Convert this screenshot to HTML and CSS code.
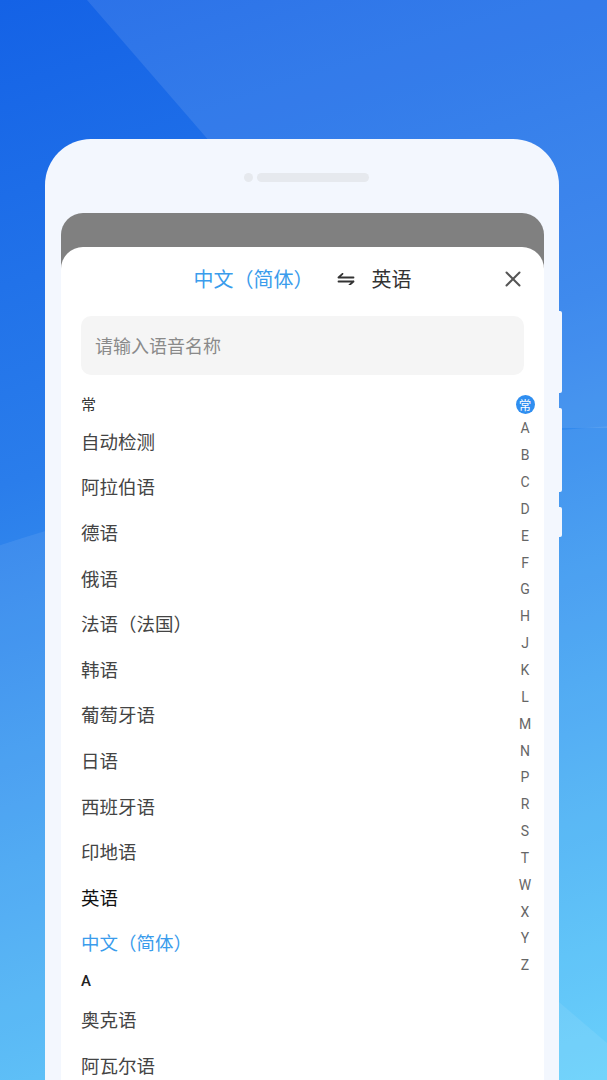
FILE: index.html
```html
<!DOCTYPE html>
<html lang="zh-CN">
<head>
<meta charset="utf-8">
<title>选择语言</title>
<link rel="stylesheet" href="styles.css">
</head>
<body>
<div class="deco"></div>
<div class="phone">
  <span class="side-btn b1"></span>
  <span class="side-btn b2"></span>
  <span class="side-btn b3"></span>
  <div class="notch"><span class="cam"></span><span class="speaker"></span></div>
  <div class="screen">
    <div class="sheet">
      <div class="head">
        <div class="title">
          <span class="src">中文（简体）</span>
          <svg class="swap" width="18" height="12" viewBox="0 0 18 12"><path d="M1.5 4.5H16.5M1.5 4.5L5.5 0.8M16.5 8.5H1.5M16.5 8.5L12.5 12" fill="none" stroke="#333" stroke-width="1.8" stroke-linecap="round" stroke-linejoin="round"/></svg>
          <span class="dst">英语</span>
        </div>
        <svg class="close" width="16" height="16" viewBox="0 0 16 16"><path d="M1.5 1.5L14.5 14.5M14.5 1.5L1.5 14.5" fill="none" stroke="#555" stroke-width="2" stroke-linecap="round"/></svg>
      </div>
      <input class="search" type="text" placeholder="请输入语音名称">
      <div class="content">
        <div class="list">
          <div class="sec">常</div>
          <div class="item">自动检测</div>
          <div class="item">阿拉伯语</div>
          <div class="item">德语</div>
          <div class="item">俄语</div>
          <div class="item">法语（法国）</div>
          <div class="item">韩语</div>
          <div class="item">葡萄牙语</div>
          <div class="item">日语</div>
          <div class="item">西班牙语</div>
          <div class="item">印地语</div>
          <div class="item target">英语</div>
          <div class="item source">中文（简体）</div>
          <div class="sec letter">A</div>
          <div class="item">奥克语</div>
          <div class="item">阿瓦尔语</div>
        </div>
        <div class="index">
          <span class="on">常</span>
          <span>A</span><span>B</span><span>C</span><span>D</span><span>E</span><span>F</span><span>G</span><span>H</span><span>J</span><span>K</span><span>L</span><span>M</span><span>N</span><span>P</span><span>R</span><span>S</span><span>T</span><span>W</span><span>X</span><span>Y</span><span>Z</span>
        </div>
      </div>
    </div>
  </div>
</div>
</body>
</html>
```

FILE: styles.css
```css
html {
  overflow: hidden;
}
body {
  margin: 0;
  width: 607px;
  height: 1080px;
  box-sizing: border-box;
  padding: 139px 0 0 45px;
  overflow: hidden;
  position: relative;
  background: linear-gradient(162deg, #1462e6 0%, #2a7deb 38%, #44a4f2 68%, #5ccdfb 100%);
  font-family: "Noto Sans CJK SC", "Noto Sans", sans-serif;
}
body::before {
  content: "";
  position: absolute;
  inset: 0;
  background: rgba(255, 255, 255, 0.1);
  clip-path: polygon(87px 0, 607px 0, 607px 428px, 458px 428px);
}
body::after {
  content: "";
  position: absolute;
  left: -1800px;
  top: 419px;
  width: 5200px;
  height: 5200px;
  border-radius: 50%;
  background: rgba(255, 255, 255, 0.08);
}
.deco {
  position: absolute;
  inset: 0;
  background: rgba(255, 255, 255, 0.08);
  clip-path: polygon(430px 892px, 607px 1043px, 607px 1080px, 430px 1080px);
  z-index: 1;
}
.phone {
  position: relative;
  z-index: 2;
  width: 514px;
  height: 1000px;
  box-sizing: border-box;
  padding-top: 33px;
  background: #f3f7fe;
  border-radius: 46px 46px 0 0;
}
.side-btn {
  position: absolute;
  right: -3px;
  width: 3px;
  background: #f3f7fe;
  border-radius: 0 2px 2px 0;
}
.b1 { top: 172px; height: 82px; }
.b2 { top: 269px; height: 84px; }
.b3 { top: 368px; height: 30px; }
.notch {
  height: 10px;
  display: flex;
  align-items: center;
  justify-content: center;
  gap: 4px;
  padding-left: 8px;
}
.cam {
  width: 9px;
  height: 9px;
  border-radius: 50%;
  background: #e6e9ee;
}
.speaker {
  width: 112px;
  height: 9px;
  border-radius: 5px;
  background: #e6e9ee;
}
.screen {
  margin: 31px 15px 0 16px;
  padding-top: 34px;
  background: #808080;
  border-radius: 22px 22px 0 0;
}
.sheet {
  height: 900px;
  background: #ffffff;
  border-radius: 22px 22px 0 0;
}
.head {
  height: 64px;
  display: grid;
  grid-template-columns: 1fr auto 1fr;
  align-items: center;
}
.title {
  grid-column: 2;
  display: flex;
  align-items: center;
  font-size: 20px;
  line-height: 1;
}
.src {
  color: #3a9cec;
}
.swap {
  margin: 0 17px 0 23px;
}
.dst {
  color: #333333;
}
.close {
  grid-column: 3;
  justify-self: end;
  margin-right: 23px;
}
.search {
  display: block;
  box-sizing: border-box;
  margin: 5px 20px 0;
  width: calc(100% - 40px);
  height: 59px;
  padding: 0 14px 2px;
  border: none;
  outline: none;
  border-radius: 10px;
  background: #f5f5f5;
  font-family: "Noto Sans CJK SC", sans-serif;
  font-size: 18px;
  color: #333;
}
.search::placeholder {
  color: #8a8a8a;
}
.content {
  display: flex;
  margin-top: 14px;
}
.list {
  flex: 1;
  padding-left: 20px;
}
.sec {
  height: 29px;
  display: flex;
  align-items: center;
  font-size: 15px;
  color: #333333;
}
.sec.letter {
  height: 31px;
  font-family: Roboto, "Noto Sans", sans-serif;
  font-weight: 500;
  color: #222;
}
.item {
  height: 45.6px;
  display: flex;
  align-items: center;
  font-size: 18.5px;
  color: #444444;
}
.item.target {
  color: #111111;
}
.item.source {
  color: #3a9cec;
}
.index {
  width: 24px;
  margin-right: 7px;
  padding-top: 4px;
  display: flex;
  flex-direction: column;
  align-items: center;
}
.index span {
  height: 26.85px;
  display: flex;
  align-items: center;
  justify-content: center;
  font-family: Roboto, "Noto Sans", sans-serif;
  font-size: 14px;
  color: #666666;
}
.index .on {
  width: 19px;
  height: 19px;
  margin: 1.5px 0;
  border-radius: 50%;
  background: #2f8ef0;
  color: #ffffff;
  font-family: "Noto Sans CJK SC", sans-serif;
  font-size: 12.5px;
}
```
